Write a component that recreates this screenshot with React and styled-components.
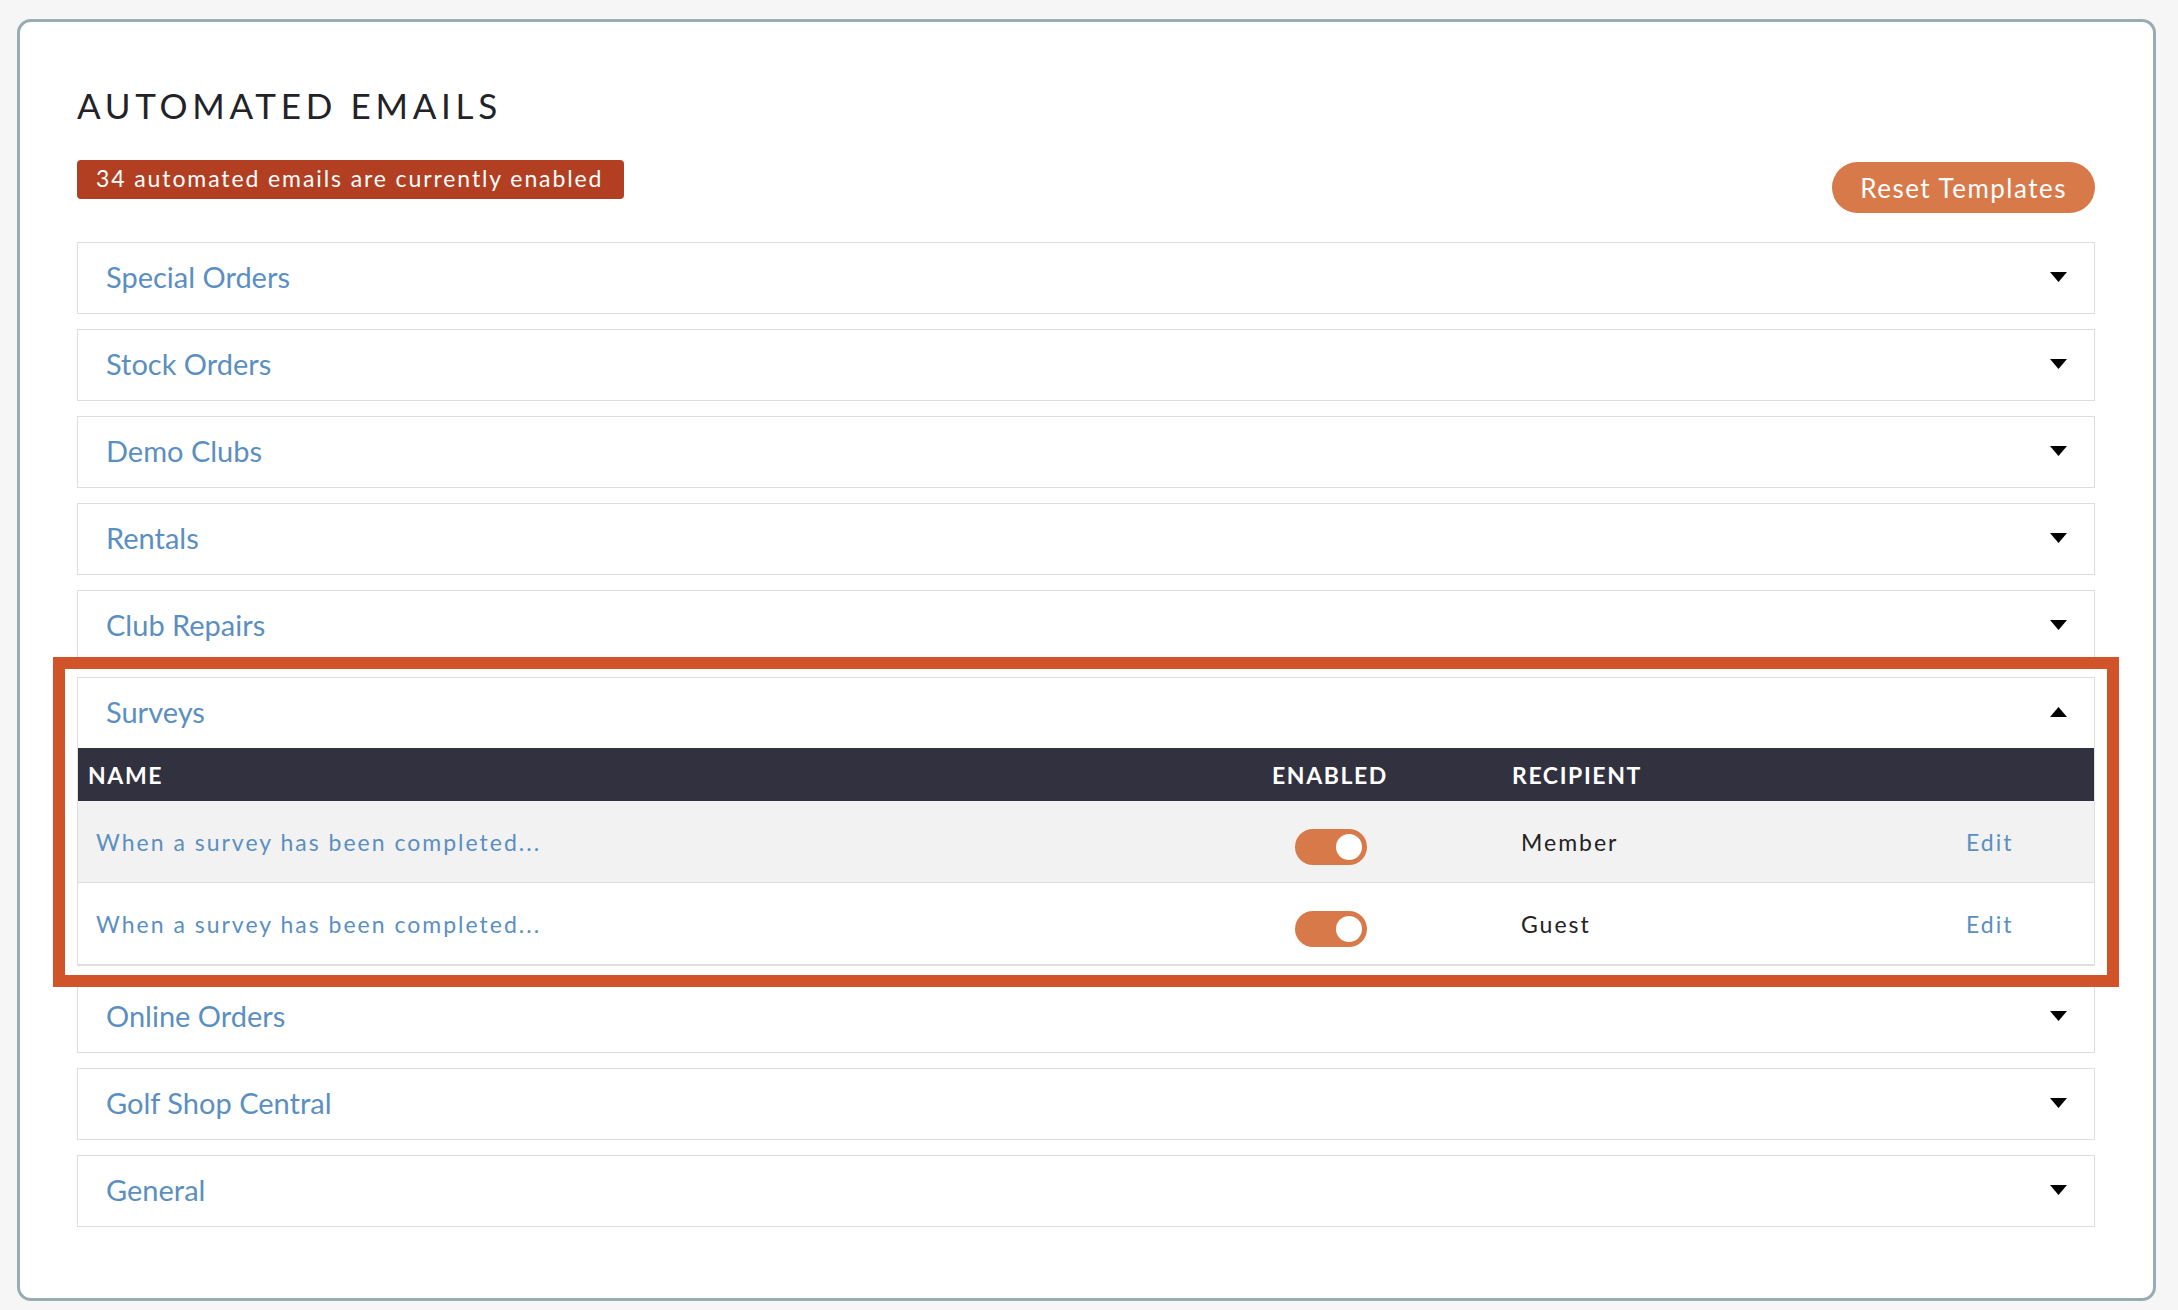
import React from 'react'
import styled, { createGlobalStyle } from 'styled-components'

const GlobalStyle = createGlobalStyle`
  body {
    margin: 0;
    background: #f6f6f6;
    font-family: Lato, "Open Sans", sans-serif;
  }
`

const Page = styled.div`
  padding: 19px 22px 7px 17px;
`

const Card = styled.div`
  background: #fff;
  border: 3px solid #98acb4;
  border-radius: 14px;
  padding: 62px 58px 71px 57px;
`

const Title = styled.h1`
  margin: 0 0 34px;
  font-size: 35px;
  line-height: 42px;
  font-weight: 400;
  letter-spacing: 4.7px;
  color: #232327;
`

const TopRow = styled.div`
  display: flex;
  justify-content: space-between;
  align-items: flex-start;
  margin-bottom: 29px;
`

const Badge = styled.span`
  background: #b33f22;
  color: #fff;
  height: 39px;
  line-height: 37px;
  font-size: 23px;
  letter-spacing: 1.9px;
  padding: 0 21px 0 19px;
  border-radius: 4px;
`

const ResetButton = styled.button`
  margin-top: 2px;
  height: 51px;
  padding: 0 28px;
  border: none;
  border-radius: 26px;
  background: #d8794a;
  color: #fff;
  font-family: inherit;
  font-size: 26px;
  letter-spacing: 1.5px;
  cursor: pointer;
`

const List = styled.div`
  display: flex;
  flex-direction: column;
  gap: 15px;
`

const Item = styled.div`
  position: relative;
  background: #fff;
  border: 1px solid #dedede;
`

const Highlight = styled.div`
  position: absolute;
  top: -21px;
  left: -25px;
  right: -25px;
  bottom: -22px;
  border: 12px solid #d0532a;
  pointer-events: none;
  z-index: 2;
`

const ItemHeader = styled.div`
  height: 70px;
  box-sizing: border-box;
  display: flex;
  align-items: center;
  justify-content: space-between;
  padding: 0 27px 3px 28px;
  cursor: pointer;
`

const ItemTitle = styled.span`
  font-size: 29px;
  color: #5b8fc1;
`

const Arrow = ({ up }) => (
  <svg width="17" height="10" viewBox="0 0 17 10">
    <polygon points={up ? '0,10 17,10 8.5,0' : '0,0 17,0 8.5,10'} fill="#000" />
  </svg>
)

const Grid = styled.div`
  display: grid;
  grid-template-columns: 1fr 250px 450px 170px;
  align-items: center;
`

const TableHead = styled(Grid)`
  height: 53px;
  background: #32313f;
  color: #fff;
  font-size: 23px;
  font-weight: 700;
  letter-spacing: 1.6px;
`

const HeadCell = styled.div`
  padding-left: ${p => p.$pad}px;
`

const Row = styled(Grid)`
  height: 81px;
  background: ${p => (p.$shade ? '#f2f2f2' : '#fff')};
  border-bottom: 1px solid #dedede;
  font-size: 23px;
  letter-spacing: 2px;
`

const Cell = styled.div`
  padding-left: ${p => p.$pad}px;
  color: ${p => (p.$link ? '#5b8fc1' : '#222')};
`

const Toggle = styled.div`
  margin: 11px 0 0 71px;
  width: 72px;
  height: 36px;
  border-radius: 18px;
  background: #d8794a;
  position: relative;
  &::after {
    content: '';
    position: absolute;
    top: 5px;
    right: 5px;
    width: 26px;
    height: 26px;
    border-radius: 50%;
    background: #fff;
  }
`

const groups = [
  'Special Orders',
  'Stock Orders',
  'Demo Clubs',
  'Rentals',
  'Club Repairs',
  'Surveys',
  'Online Orders',
  'Golf Shop Central',
  'General',
]

const surveyRows = [
  { name: 'When a survey has been completed...', recipient: 'Member' },
  { name: 'When a survey has been completed...', recipient: 'Guest' },
]

const App = () => {
  return (
    <Page>
      <GlobalStyle />
      <Card>
        <Title>AUTOMATED EMAILS</Title>
        <TopRow>
          <Badge>34 automated emails are currently enabled</Badge>
          <ResetButton>Reset Templates</ResetButton>
        </TopRow>
        <List>
          {groups.map(g =>
            g === 'Surveys' ? (
              <Item key={g}>
                <ItemHeader>
                  <ItemTitle>{g}</ItemTitle>
                  <Arrow up />
                </ItemHeader>
                <TableHead>
                  <HeadCell $pad={10}>NAME</HeadCell>
                  <HeadCell $pad={48}>ENABLED</HeadCell>
                  <HeadCell $pad={38}>RECIPIENT</HeadCell>
                  <HeadCell />
                </TableHead>
                {surveyRows.map((r, i) => (
                  <Row key={i} $shade={i === 0}>
                    <Cell $pad={18} $link>{r.name}</Cell>
                    <div><Toggle /></div>
                    <Cell $pad={47}>{r.recipient}</Cell>
                    <Cell $pad={42} $link>Edit</Cell>
                  </Row>
                ))}
                <Highlight />
              </Item>
            ) : (
              <Item key={g}>
                <ItemHeader>
                  <ItemTitle>{g}</ItemTitle>
                  <Arrow />
                </ItemHeader>
              </Item>
            )
          )}
        </List>
      </Card>
    </Page>
  )
}

export default App
